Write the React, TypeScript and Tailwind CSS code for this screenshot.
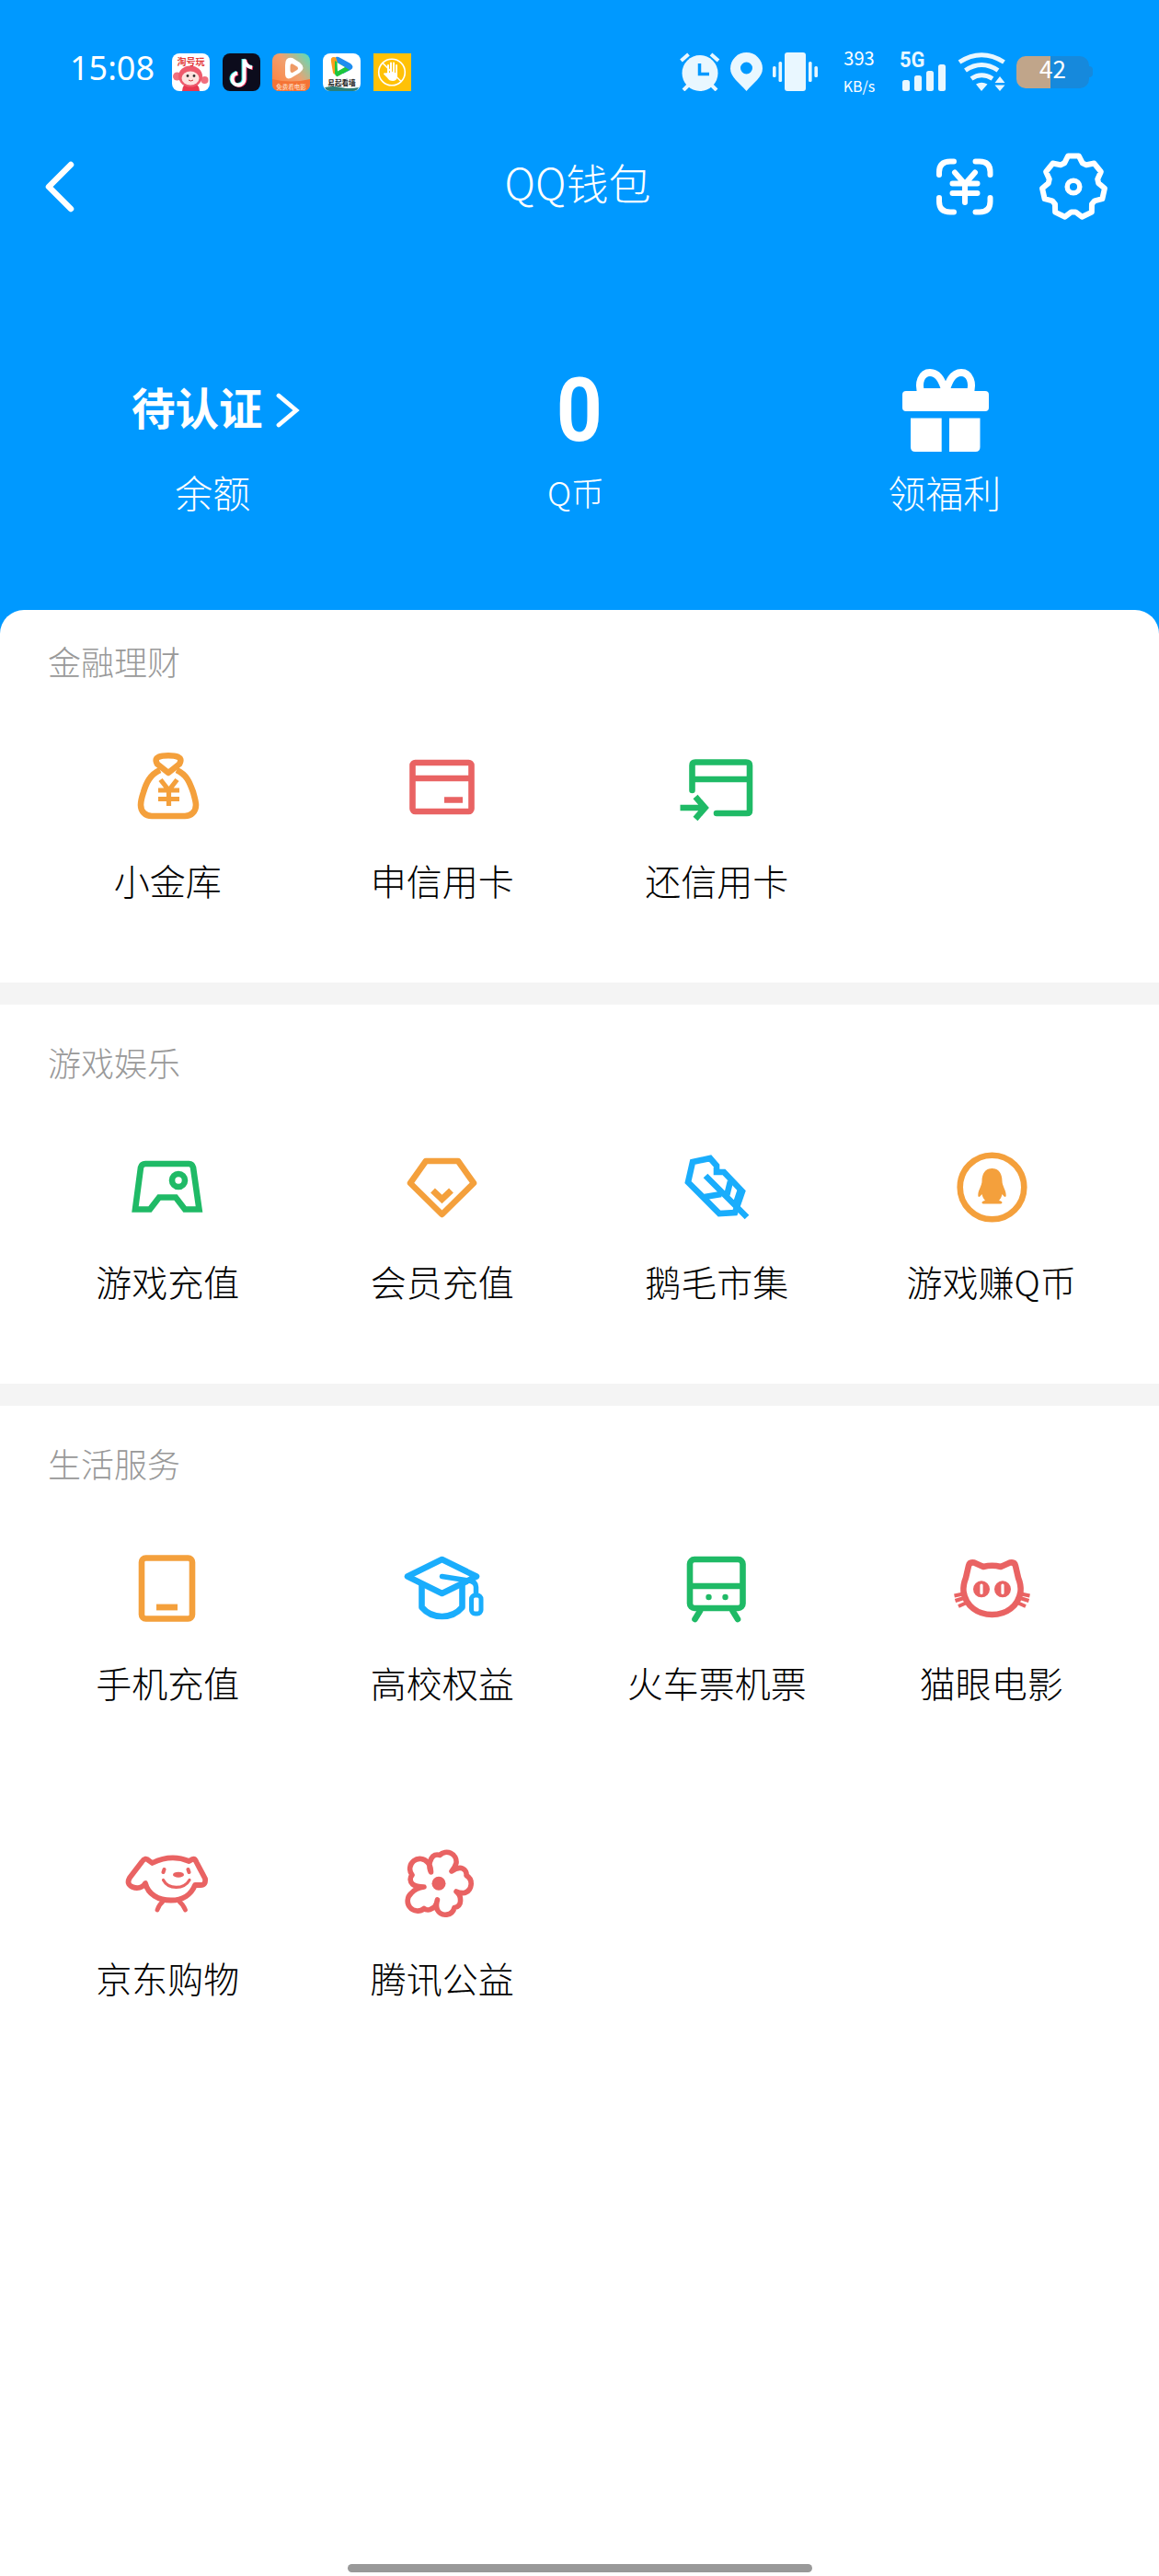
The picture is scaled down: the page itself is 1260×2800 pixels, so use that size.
import type { ReactNode } from "react";

const ORANGE = "#f4a03c";
const RED = "#e96363";
const GREEN = "#1fba66";
const BLUE = "#1aadfc";

function Glyph({ color, width = 6.6, children }: { color: string; width?: number; children: ReactNode }) {
  return (
    <svg
      className="size-[100px]"
      viewBox="0 0 100 100"
      fill="none"
      stroke={color}
      strokeWidth={width}
      strokeLinejoin="round"
    >
      {children}
    </svg>
  );
}

function MoneyBagIcon() {
  return (
    <Glyph color={ORANGE}>
      <path d="M51 35 L39 25.500 C34 17 44 16.200 51 16.200 C58 16.200 68 17 63 25.500 Z" />
      <path d="M42 32 C31 37 27 46 24 56 C22 62 21 67 21 70 C21 77 26 82 33 82 H69 C76 82 81 77 81 70 C81 66 79 60 78 56 C74 45 71 37 60 32" />
      <path strokeWidth="5.200" strokeLinejoin="miter" d="M42.500 42.500 L51.500 54 L60.500 42.500 M51.500 53 V71 M40 54 H63 M40 63.500 H63" />
    </Glyph>
  );
}

function CardIcon() {
  return (
    <Glyph color={RED}>
      <rect x="17.500" y="24" width="64" height="53" rx="3" />
      <path d="M17 41 H82 M52 64.500 H72" />
    </Glyph>
  );
}

function RepayIcon() {
  return (
    <Glyph color={GREEN}>
      <path strokeLinecap="round" d="M23.500 54 V27 Q23.500 23.500 27 23.500 H82 Q86 23.500 86 27 V76 Q86 79 83 79 H50" />
      <path strokeLinejoin="miter" d="M24 42 H86 M10.500 73 H36 M27 61 L37.500 73 L27 85" />
    </Glyph>
  );
}

function GamepadIcon() {
  return (
    <Glyph color={GREEN}>
      <path strokeLinejoin="miter" d="M15 73.500 L21 28 Q22 24 26 24 H73.500 Q77 24 78 28 L84.500 73.500 H69 L59 60.500 H41 L31 73.500 Z" />
      <circle cx="62" cy="42" r="7" />
    </Glyph>
  );
}

function DiamondIcon() {
  return (
    <Glyph color={ORANGE}>
      <path d="M32 21 H67 L84 45 L49.500 79 L15 45 Z" />
      <path strokeWidth="7" strokeLinejoin="miter" d="M39.500 53 L49.500 62.500 L59.500 53" />
    </Glyph>
  );
}

function FeatherIcon() {
  return (
    <Glyph color={BLUE}>
      <path strokeLinejoin="miter" d="M24 22 L43 18 L50 26 V33 H58 L78 54 L70 77 L53 78 L19 44 Z" />
      <path d="M38 37 L83 82 M37 60 L55 57 M65 43 L61 59 M76 52 L70 70" />
    </Glyph>
  );
}

function PenguinIcon() {
  return (
    <Glyph color={ORANGE}>
      <circle cx="50.500" cy="49.500" r="34.800" />
      <path
        fill={ORANGE}
        stroke="none"
        d="M50.500 29 C43 29 39.500 35 39.500 43 C39.500 48 35.500 52 35.300 58 C35.300 62 38 59 39.500 57 C40 60 41.500 62 43 64 C39 64.500 38.500 67 41 67.500 H60 C62.500 67 62 64.500 58 64 C59.500 62 61 60 61.500 57 C63 59 65.700 62 65.700 58 C65.500 52 61.500 48 61.500 43 C61.500 35 58 29 50.500 29 Z"
      />
    </Glyph>
  );
}

function PhoneIcon() {
  return (
    <Glyph color={ORANGE}>
      <rect x="22" y="16.500" width="55" height="66" rx="4.500" />
      <path strokeWidth="6.800" d="M38 70 H61" />
    </Glyph>
  );
}

function GraduationIcon() {
  return (
    <Glyph color={BLUE}>
      <path d="M49.500 18 L87 36.500 L49.500 55 L12 36.500 Z" />
      <path d="M27.500 45 V70 Q36 80 49.500 80 Q63 80 71.500 70 V45" />
      <path strokeLinecap="round" strokeWidth="5.500" d="M49.500 36.500 L78 41 Q86.500 42 86.500 48 V56" />
      <rect x="81.500" y="57" width="10.500" height="20" rx="4" strokeWidth="5" />
    </Glyph>
  );
}

function TrainIcon() {
  return (
    <Glyph color={GREEN}>
      <rect x="21" y="18" width="57.500" height="53" rx="5" />
      <path d="M20 47 H79" />
      <circle cx="41.500" cy="59" r="3.200" fill={GREEN} stroke="none" />
      <circle cx="59.500" cy="59" r="3.200" fill={GREEN} stroke="none" />
      <path strokeLinecap="round" d="M32 74 L26.500 83 M67.500 74 L73 83" />
    </Glyph>
  );
}

function CatIcon() {
  return (
    <Glyph color={RED}>
      <path d="M41 26 Q50.500 23.500 60 26 L70 21.500 Q75 20.500 76 25 L79 38 C81 43 82 48 81.500 53 C79 69 66 78 50.500 78 C35 78 22 69 19.500 53 C19 48 20 43 22 38 L25 25 Q26 20.500 31 21.500 Z" />
      <circle cx="39" cy="50.300" r="9" fill={RED} stroke="none" />
      <circle cx="62" cy="50.300" r="9" fill={RED} stroke="none" />
      <path stroke="#fff" strokeWidth="3.200" strokeLinecap="round" d="M39 46 V54.500 M62 46 V54.500" />
      <path
        strokeWidth="4"
        d="M9.500 57.500 L19 55.500 M10.500 63 L20 60 M14 69 L23 65 M91.500 57.500 L82 55.500 M90.500 63 L81 60 M87 69 L78 65"
      />
    </Glyph>
  );
}

function PuppyIcon() {
  return (
    <Glyph color={RED} width={5.8}>
      <path d="M33.500 27 Q54 17 73.500 25 L77 23 Q80 22 81.500 26 L91 44 Q92 51 86 51 L80 51 C76 61 67 67.500 54 67.500 C40 67.500 29 61 26 49 C23 54 17 55 12 53 Q5 50 9 43 L22 26 Q26 20 30 24.500 Z" />
      <path strokeLinecap="round" strokeWidth="4.800" d="M45 69 Q41 72 39 78 M63 69 Q67 72 69.500 78" />
      <path strokeLinecap="round" strokeWidth="3.200" d="M45.500 45.500 C51 56 68 56 74 45.500" />
      <path strokeLinecap="round" strokeWidth="4" d="M46.500 34 L45.500 37 M72.500 34 L73.500 37" />
      <ellipse cx="62" cy="39.700" rx="6" ry="3" fill={RED} stroke="none" />
    </Glyph>
  );
}

function FlowerIcon() {
  return (
    <Glyph color={RED} width={5.6}>
      <path d="M37.500 37 Q34 29 38 22 A7 7 0 0 1 47 18.500 A10.500 10.500 0 0 1 65 27 Q64 31 60 36 Q67 31 72 33 A7 7 0 0 1 76 40.500 A10.500 10.500 0 0 1 74 59.500 Q69 60 65 58 Q70 62 69.500 68 A7 7 0 0 1 63 75.500 A10 10 0 0 1 44.500 78 Q42.500 73 44.500 67 Q43 75 38.500 76.500 A7 7 0 0 1 30 76.500 A10.500 10.500 0 0 1 16 60 Q21 54 30 53 Q21 53 17.500 50 A7 7 0 0 1 17 40 A10.500 10.500 0 0 1 34 26.500 Q37.500 30 37.500 37 Z" />
      <circle cx="46" cy="49.300" r="7.500" fill={RED} stroke="none" />
    </Glyph>
  );
}

const SECTIONS = [
  {
    title: "金融理财",
    items: [
      { label: "小金库", icon: <MoneyBagIcon /> },
      { label: "申信用卡", icon: <CardIcon /> },
      { label: "还信用卡", icon: <RepayIcon /> },
    ],
  },
  {
    title: "游戏娱乐",
    items: [
      { label: "游戏充值", icon: <GamepadIcon /> },
      { label: "会员充值", icon: <DiamondIcon /> },
      { label: "鹅毛市集", icon: <FeatherIcon /> },
      { label: "游戏赚Q币", icon: <PenguinIcon /> },
    ],
  },
  {
    title: "生活服务",
    items: [
      { label: "手机充值", icon: <PhoneIcon /> },
      { label: "高校权益", icon: <GraduationIcon /> },
      { label: "火车票机票", icon: <TrainIcon /> },
      { label: "猫眼电影", icon: <CatIcon /> },
      { label: "京东购物", icon: <PuppyIcon /> },
      { label: "腾讯公益", icon: <FlowerIcon /> },
    ],
  },
];

function NotificationApps() {
  return (
    <div className="flex gap-[13.7px]">
      <svg className="size-[41px]" viewBox="0 0 41 41">
        <rect width="41" height="41" rx="8" fill="#fff" />
        <circle cx="5.500" cy="25" r="4.500" fill="#f0707f" />
        <circle cx="35.500" cy="29" r="4" fill="#f0707f" />
        <path d="M11 41 Q12 31 20 31 Q29 31 30 41 Z" fill="#e8384f" />
        <ellipse cx="20" cy="25" rx="13" ry="11.500" fill="#ee5a6c" />
        <ellipse cx="20" cy="27" rx="9.500" ry="7.500" fill="#fde3e0" />
        <circle cx="17" cy="24.500" r="1.400" fill="#333" />
        <circle cx="24" cy="24.500" r="1.400" fill="#333" />
        <path d="M18 29 Q20.500 31 23 29" fill="none" stroke="#c33" strokeWidth="1" />
        <text x="20.500" y="12.500" textAnchor="middle" fontSize="10" fontWeight="700" fill="#e23a3a">
          淘号玩
        </text>
      </svg>
      <svg className="size-[41px]" viewBox="0 0 41 41" fill="none" strokeWidth="4">
        <rect width="41" height="41" rx="8" fill="#0c0c1c" />
        <path d="M22.500 6 V27 A6.500 6.500 0 1 1 15 21 M22.500 6 Q24 14 32 15" stroke="#2ee6e0" />
        <path d="M24.500 7 V28 A6.500 6.500 0 1 1 17 22 M24.500 7 Q26 15 33 16" stroke="#f5315b" />
        <path d="M23.500 6.500 V27.500 A6.500 6.500 0 1 1 16 21.500 M23.500 6.500 Q25 14.500 32 15.500" stroke="#fff" />
      </svg>
      <svg className="size-[41px]" viewBox="0 0 41 41">
        <defs>
          <linearGradient id="video" x1="0" y1="0.800" x2="1" y2="0">
            <stop offset="0" stopColor="#ff8340" />
            <stop offset="0.500" stopColor="#f0a070" />
            <stop offset="1" stopColor="#4fe0c0" />
          </linearGradient>
        </defs>
        <rect width="41" height="41" rx="8" fill="url(#video)" />
        <path d="M0 28 Q20 33 41 28 V33 Q41 41 33 41 H8 Q0 41 0 33 Z" fill="#f57335" />
        <path d="M14 13 Q14 3 22 5 L30 10 Q37 16 30 21 L20 27 Q14 29 14 22 Z" fill="#fff" />
        <path d="M19.500 14 Q19.500 10 23 12 L27 14.500 Q29 16.500 27 18 L22 21 Q19.500 21.500 19.500 18 Z" fill="#ee9a66" />
        <text x="20.500" y="38.500" textAnchor="middle" fontSize="6.500" fill="#ffe9d8">
          免费看电影
        </text>
      </svg>
      <svg className="size-[41px]" viewBox="0 0 41 41">
        <rect width="41" height="41" rx="8" fill="#fff" />
        <path d="M12 4 Q8 4 9 9 L11 21 Q12 24 15 22 L17 5 Z" fill="#ff9d1c" />
        <path d="M14 4 Q16 3 19 5 L30 11 Q35 15 30 18 L22 22 L16 10 Z" fill="#1d8df0" />
        <path d="M13 8 L13 22 Q14 27 18 24 L29 18 L24 15 Z" fill="#1dc63c" />
        <path d="M15.500 10 L24 15 L16 19.500 Z" fill="#fff" />
        <path d="M2 37 Q12 35 20 37 T39 37 Q37 41 33 41 H8 Q4 41 2 37 Z" fill="#2a7f7a" />
        <text x="20.500" y="34.500" textAnchor="middle" fontSize="7.600" fontWeight="700" fill="#222">
          易起看墙
        </text>
      </svg>
      <svg className="size-[41px]" viewBox="0 0 41 41" fill="none" stroke="#fff">
        <rect width="41" height="41" fill="#ffc107" stroke="none" />
        <circle cx="20" cy="20.500" r="14.300" strokeWidth="1.600" />
        <path strokeWidth="1.600" d="M10 10.500 L30 30.500" />
        <path strokeWidth="2" strokeLinecap="round" d="M16 13 V23 M19 10.500 V23 M22 10.500 V23 M25 13 V24" />
        <path fill="#fff" stroke="none" d="M15 21 H26 V26 Q25 30 21 30 Q17 30 15 26.500 L11 22.500 Q11.500 20.500 13.500 21.500 Z" />
      </svg>
    </div>
  );
}

function StatusIcons() {
  return (
    <div className="flex items-center">
      <svg className="h-[42px] w-[44px]" viewBox="739 57 44 42" fill="none" stroke="#e9f7ff">
        <circle cx="761" cy="79.500" r="19.500" fill="#e9f7ff" stroke="none" />
        <path strokeWidth="4" d="M740.500 66 L748.500 59 M781 66 L773 59 M743 98 L749 92 M779 98 L773 92" />
        <path stroke="#0099ff" strokeWidth="3.500" d="M760.500 69 V80.500 H771" />
      </svg>
      <svg className="ml-[11px] h-[42px] w-[35px]" viewBox="0 0 35 42">
        <path
          fill="#e9f7ff"
          fillRule="evenodd"
          d="M17.500 0 A17.500 17.500 0 0 0 0 17.500 C0 27 10 33 17.500 42 C25 33 35 27 35 17.500 A17.500 17.500 0 0 0 17.500 0 Z M17.500 10.500 A6.500 6.500 0 1 1 17.500 23.500 A6.500 6.500 0 1 1 17.500 10.500 Z"
        />
      </svg>
      <svg className="ml-[11px] h-[42px] w-[49px]" viewBox="0 0 49 42" fill="#e9f7ff">
        <rect x="13" width="23" height="42" rx="3" />
        <rect x="0" y="15" width="3.600" height="12" rx="1.500" />
        <rect x="6.500" y="10" width="3.600" height="22" rx="1.500" />
        <rect x="39" y="10" width="3.600" height="22" rx="1.500" />
        <rect x="45.400" y="15" width="3.600" height="12" rx="1.500" />
      </svg>
      <div className="ml-[24px] flex w-[42px] flex-col items-center gap-[8px] text-[20px] leading-[22px] text-white">
        <span>393</span>
        <span className="text-[16px]">KB/s</span>
      </div>
      <div className="ml-[23px] flex h-[42px] w-[51px] flex-col">
        <span className="h-[13px] origin-left scale-x-95 font-['Roboto',sans-serif] text-[23px] leading-[18px] font-bold text-[#e9f7ff]">
          5G
        </span>
        <svg className="ml-[3px] h-[29px] w-[48px]" viewBox="982.500 70 48 29" fill="#e9f7ff">
          <rect x="982.500" y="87" width="8" height="12" rx="2.500" />
          <rect x="995.500" y="82" width="8" height="17" rx="2.500" />
          <rect x="1008.500" y="77" width="8" height="22" rx="2.500" />
          <rect x="1021.500" y="70" width="8" height="29" rx="2.500" />
        </svg>
      </div>
      <svg className="ml-[12px] h-[42px] w-[52px]" viewBox="1042 57 52 42" fill="none" stroke="#e9f7ff" strokeWidth="5">
        <path d="M1044 67.500 Q1068 52 1092.500 67.500 M1050.500 76.500 Q1068 64.500 1086 76.500 M1057 85.500 Q1068 78 1080 85.500" />
        <path stroke="none" fill="#e9f7ff" d="M1062 91.500 Q1068 88 1074.500 91.500 L1068 99 Z M1082.500 90 L1088 83 L1093.500 90 Z M1082.500 92.500 H1093.500 L1088 99 Z" />
      </svg>
      <div className="ml-[12px] flex items-center">
        <div className="flex h-[35px] w-[79px] items-start justify-center rounded-[10px] bg-[linear-gradient(90deg,#c0a58a_37px,#1689dc_37px)] text-[26px] leading-[30px] text-white">
          <span className="-mt-0.5">42</span>
        </div>
        <div className="h-[12px] w-[4px] rounded-r-full bg-[#1689dc]" />
      </div>
    </div>
  );
}

// seven-tooth cog outline around 37,37
const GEAR = Array.from({ length: 7 }, (_, i) =>
  [
    [-10, 34],
    [10, 34],
    [21, 27.5],
    [30.5, 27.5],
  ].map(([offset, r]) => {
    const a = ((i * 360) / 7 + offset - 90) * (Math.PI / 180);
    return `${(37 + r * Math.cos(a)).toFixed(2)},${(37 + r * Math.sin(a)).toFixed(2)}`;
  })
)
  .flat()
  .join(" ");

function NavBar() {
  return (
    <div className="mt-[44px] grid h-[106px] grid-cols-3 items-center">
      <svg className="ml-[47px] h-[60px] w-[36px]" viewBox="47 173 36 60" fill="none" stroke="#fff" strokeWidth="6.500" strokeLinecap="round" strokeLinejoin="round">
        <path d="M77 179 L53 203 L77 227" />
      </svg>
      <h1 className="-mt-3 -ml-1 text-center text-[46px] font-light leading-[60px]">QQ钱包</h1>
      <div className="mr-[55px] flex items-center justify-end gap-[49px]">
        <svg className="size-[64px]" viewBox="1016 171 64 64" fill="none" stroke="#fff" strokeWidth="6" strokeLinecap="round">
          <path d="M1021 190 V187 Q1021 175.500 1033 175.500 H1037 M1060.500 175.500 H1065 Q1076.500 175.500 1076.500 187 V190 M1076.500 215 V219 Q1076.500 230.500 1065 230.500 H1060.500 M1037 230.500 H1033 Q1021 230.500 1021 219 V215" />
          <path d="M1038 187.500 L1049 200 L1060 187.500 M1049 200 V220 M1035.500 199.500 H1062.500 M1035.500 210 H1062.500" />
        </svg>
        <svg className="size-[76px]" viewBox="-1 -1 76 76" fill="none" stroke="#fff" strokeWidth="6" strokeLinejoin="round">
          <polygon points={GEAR} />
          <circle cx="37" cy="37" r="6.800" strokeWidth="5.500" />
        </svg>
      </div>
    </div>
  );
}

function Balances() {
  return (
    <div className="mx-[32px] mt-[140px] grid grid-cols-3 text-center">
      <div>
        <div className="flex h-[100px] items-center justify-center gap-[14px] pl-[6px] text-[47.5px] font-bold">
          <span className="-mt-2">待认证</span>
          <svg className="h-[40px] w-[26px]" viewBox="300 427 26 40" fill="none" stroke="#fff" strokeWidth="4.800" strokeLinecap="round">
            <path d="M303 431 L322 447 L303 463" />
          </svg>
        </div>
        <p className="mt-[13px] text-[41px] font-light leading-[50px]">余额</p>
      </div>
      <div>
        <div className="flex h-[100px] items-center justify-center">
          <span className="scale-x-90 font-['Roboto',sans-serif] text-[97px] font-bold leading-[100px]">0</span>
        </div>
        <p className="mt-[13px] -ml-2 text-[36px] font-light leading-[50px]">Q币</p>
      </div>
      <div>
        <div className="flex h-[100px] items-center justify-center">
          <svg className="mr-[2px] h-[90px] w-[94px]" viewBox="981 402 94 90" fill="#fff">
            <rect x="981" y="426" width="94" height="22" rx="4" />
            <path d="M990 455.500 H1023.700 V492 H995 Q990 492 990 487 Z M1032 455.500 H1065.500 V487 Q1065.500 492 1060.500 492 H1032 Z" />
            <path
              fill="none"
              stroke="#fff"
              strokeWidth="8"
              d="M1002 430 C997 417 1002 406 1011 406 C1021 406 1025 417 1028 427 C1031 417 1035 406 1045 406 C1054 406 1059 417 1054 430 M1003 427 H1053"
            />
          </svg>
        </div>
        <p className="mt-[13px] -ml-1 text-[41px] font-light leading-[50px]">领福利</p>
      </div>
    </div>
  );
}

export default function App() {
  return (
    <div className="flex h-[2800px] w-[1260px] flex-col bg-[#0099ff] font-['Noto_Sans_CJK_SC',sans-serif]">
      <header className="h-[663px] shrink-0 text-white">
        <div className="flex h-[106px] items-center justify-between pt-[50px] pr-[72px] pl-[76px]">
          <div className="flex items-center gap-[19px]">
            <span className="-mt-2 w-[92px] font-['Noto_Sans',sans-serif] text-[36px] leading-[50px]">15:08</span>
            <NotificationApps />
          </div>
          <StatusIcons />
        </div>
        <NavBar />
        <Balances />
      </header>

      <main className="flex flex-1 flex-col overflow-hidden rounded-t-[26px] bg-white">
        {SECTIONS.map((section, i) => (
          <section
            key={section.title}
            className={
              i === 0
                ? "h-[405px] pt-[30px]"
                : "h-[436px] border-t-[24px] border-[#f4f4f4] pt-[37px] last-of-type:h-auto"
            }
          >
            <h2 className="ml-[52px] text-[36px] font-light leading-[50px] text-[#999]">{section.title}</h2>
            <div className="mx-[33px] mt-[62px] grid grid-cols-4 gap-y-[145px]">
              {section.items.map((item) => (
                <div key={item.label} className="flex flex-col items-center">
                  {item.icon}
                  <span className="mt-[26px] whitespace-nowrap text-[39px] font-light leading-[50px] text-black">
                    {item.label}
                  </span>
                </div>
              ))}
            </div>
          </section>
        ))}
        <div className="mx-auto mt-auto mb-[4px] h-[9px] w-[505px] rounded-full bg-[#999]" />
      </main>
    </div>
  );
}
